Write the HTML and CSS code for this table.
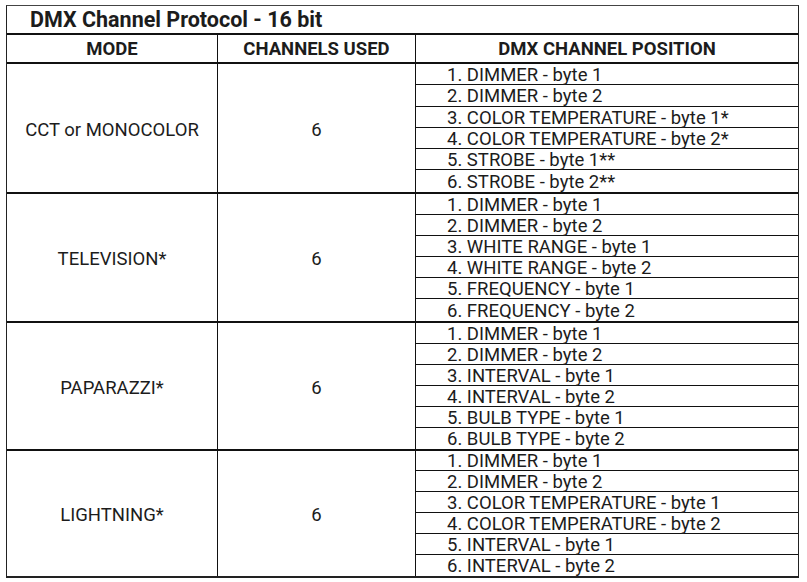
FILE: index.html
```html
<!DOCTYPE html>
<html>
<head>
<meta charset="utf-8">
<link rel="stylesheet" href="styles.css">
</head>
<body>
<div class="sheet">
  <div class="title">DMX Channel Protocol - 16 bit</div>
  <div class="row head">
    <div class="cell c1">MODE</div>
    <div class="cell c2">CHANNELS USED</div>
    <div class="cell c3">DMX CHANNEL POSITION</div>
  </div>
  <div class="row group g1">
    <div class="cell c1 mid">CCT or MONOCOLOR</div>
    <div class="cell c2 mid">6</div>
    <div class="list">
      <div class="item">1. DIMMER - byte 1</div>
      <div class="item">2. DIMMER - byte 2</div>
      <div class="item">3. COLOR TEMPERATURE - byte 1*</div>
      <div class="item">4. COLOR TEMPERATURE - byte 2*</div>
      <div class="item">5. STROBE - byte 1**</div>
      <div class="item">6. STROBE - byte 2**</div>
    </div>
  </div>
  <div class="row group g2">
    <div class="cell c1 mid">TELEVISION*</div>
    <div class="cell c2 mid">6</div>
    <div class="list">
      <div class="item">1. DIMMER - byte 1</div>
      <div class="item">2. DIMMER - byte 2</div>
      <div class="item">3. WHITE RANGE - byte 1</div>
      <div class="item">4. WHITE RANGE - byte 2</div>
      <div class="item">5. FREQUENCY - byte 1</div>
      <div class="item">6. FREQUENCY - byte 2</div>
    </div>
  </div>
  <div class="row group g3">
    <div class="cell c1 mid">PAPARAZZI*</div>
    <div class="cell c2 mid">6</div>
    <div class="list">
      <div class="item">1. DIMMER - byte 1</div>
      <div class="item">2. DIMMER - byte 2</div>
      <div class="item">3. INTERVAL - byte 1</div>
      <div class="item">4. INTERVAL - byte 2</div>
      <div class="item">5. BULB TYPE - byte 1</div>
      <div class="item">6. BULB TYPE - byte 2</div>
    </div>
  </div>
  <div class="row group g4 last">
    <div class="cell c1 mid">LIGHTNING*</div>
    <div class="cell c2 mid">6</div>
    <div class="list">
      <div class="item">1. DIMMER - byte 1</div>
      <div class="item">2. DIMMER - byte 2</div>
      <div class="item">3. COLOR TEMPERATURE - byte 1</div>
      <div class="item">4. COLOR TEMPERATURE - byte 2</div>
      <div class="item">5. INTERVAL - byte 1</div>
      <div class="item">6. INTERVAL - byte 2</div>
    </div>
  </div>
</div>
</body>
</html>
```
FILE: styles.css
```css
html, body {
  margin: 0;
  padding: 0;
  background: #ffffff;
}
body {
  font-family: Roboto, "Liberation Sans", sans-serif;
  color: #1c1c1c;
}
.sheet {
  margin: 5px 0 0 6px;
  width: 793px;
  box-sizing: border-box;
  border: 1px solid #222;
  border-top-color: #444;
  border-bottom: 2px solid #222;
}
.title {
  height: 29px;
  box-sizing: border-box;
  padding-left: 23px;
  font-weight: 700;
  font-size: 21.5px;
  line-height: 27px;
  border-bottom: 2px solid #111;
}
.row {
  display: grid;
  grid-template-columns: 211px 198px 1fr;
  border-bottom: 2px solid #111;
}
.row.last {
  border-bottom: none;
}
.head {
  height: 27px;
  font-weight: 700;
  font-size: 18.5px;
}
.group {
  font-size: 18.5px;
}
.g1 { height: 127.5px; }
.g2 { height: 127px; }
.g3 { height: 126px; }
.g4 { height: 125px; }
.cell {
  display: flex;
  align-items: center;
  justify-content: center;
}
.mid {
  padding-top: 4px;
}
.c1 {
  border-right: 1.5px solid #111;
}
.c2 {
  border-right: 1.5px solid #111;
}
.list {
  display: grid;
  grid-template-rows: repeat(6, minmax(0, 1fr));
  min-height: 0;
}
.item {
  display: flex;
  align-items: center;
  min-height: 0;
  padding-left: 31px;
  padding-top: 2px;
  line-height: 18px;
  white-space: nowrap;
  border-bottom: 1.5px solid #111;
}
.item:last-child {
  border-bottom: none;
}
```
